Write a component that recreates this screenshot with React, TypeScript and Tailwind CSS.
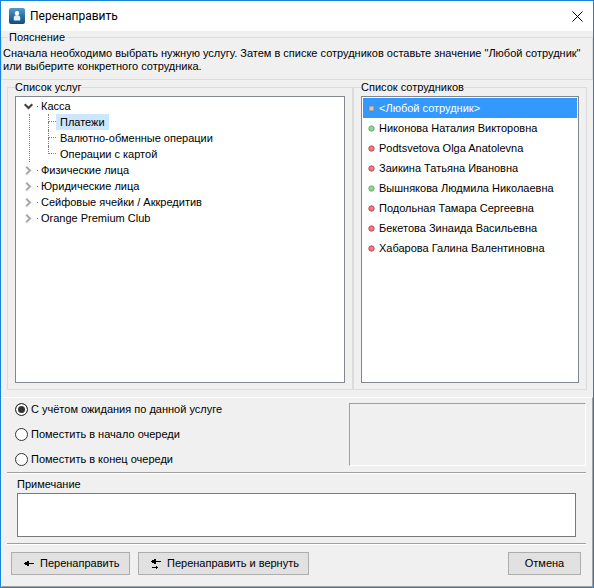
import React, { useState } from "react";

type Status = "any" | "free" | "busy";

const SERVICES: { name: string; children: string[] }[] = [
  { name: "Касса", children: ["Платежи", "Валютно-обменные операции", "Операции с картой"] },
  { name: "Физические лица", children: [] },
  { name: "Юридические лица", children: [] },
  { name: "Сейфовые ячейки / Аккредитив", children: [] },
  { name: "Orange Premium Club", children: [] },
];

const EMPLOYEES: { name: string; status: Status }[] = [
  { name: "<Любой сотрудник>", status: "any" },
  { name: "Никонова Наталия Викторовна", status: "free" },
  { name: "Podtsvetova Olga Anatolevna", status: "busy" },
  { name: "Заикина Татьяна Ивановна", status: "busy" },
  { name: "Вышнякова Людмила Николаевна", status: "free" },
  { name: "Подольная Тамара Сергеевна", status: "busy" },
  { name: "Бекетова Зинаида Васильевна", status: "busy" },
  { name: "Хабарова Галина Валентиновна", status: "busy" },
];

const QUEUE_MODES = [
  "С учётом ожидания по данной услуге",
  "Поместить в начало очереди",
  "Поместить в конец очереди",
];

const AppIcon = () => (
  <svg width="16" height="16" viewBox="0 0 16 16" aria-hidden="true">
    <defs>
      <linearGradient id="appIcon" x1="0" y1="0" x2="0" y2="1">
        <stop offset="0" stopColor="#5599cc" />
        <stop offset="0.5" stopColor="#2c70a8" />
        <stop offset="1" stopColor="#154a7c" />
      </linearGradient>
    </defs>
    <rect width="16" height="16" rx="2" fill="url(#appIcon)" />
    <circle cx="8" cy="5.2" r="2.2" fill="#fff" />
    <path d="M4.8 12.6V9.6Q4.8 7.4 7 7.2H9Q11.2 7.4 11.2 9.6V12.6Z" fill="#e8f0f7" />
  </svg>
);

const StatusIcon = ({ status }: { status: Status }) => {
  if (status === "any") {
    return (
      <svg width="7" height="7" viewBox="0 0 7 7" aria-hidden="true">
        <path d="M0.8 0.8L6.2 6.2M6.2 0.8L0.8 6.2" stroke="#7d7d7d" strokeWidth="2" />
        <rect x="1" y="1" width="5" height="5" fill="#a5a19c" />
        <rect x="2" y="2" width="3" height="3" fill="#d0ccc6" />
      </svg>
    );
  }
  const free = status === "free";
  return (
    <svg width="7" height="7" viewBox="0 0 7 7" aria-hidden="true">
      <circle cx="3.5" cy="3.5" r="2.7" fill={free ? "#86cf86" : "#e8707a"} stroke={free ? "#6ab56c" : "#d04a58"} />
      <circle cx="3.5" cy="3" r="1" fill={free ? "#a9e0a6" : "#f0959c"} />
    </svg>
  );
};

const Chevron = ({ open }: { open: boolean }) => (
  <svg width="9" height="9" viewBox="0 0 9 9" fill="none" strokeWidth="2" aria-hidden="true">
    {open ? <path d="M0.7 2.2L4.5 6L8.3 2.2" stroke="#404040" /> : <path d="M2.2 0.7L6 4.5L2.2 8.3" stroke="#a6a6a6" />}
  </svg>
);

const BackArrow = () => (
  <svg width="11" height="7" viewBox="0 0 11 7" shapeRendering="crispEdges" aria-hidden="true">
    <path d="M0 3H1V2H3V1H5V3H10V4H5V6H3V5H1V4H0Z" />
  </svg>
);

const SwapArrow = () => (
  <svg width="11" height="11" viewBox="0 0 11 11" shapeRendering="crispEdges" aria-hidden="true">
    <path d="M0 3H1V2H3V1H5V3H10V4H5V6H3V5H1V4H0Z" />
    <path d="M1 9H5V8H6V9H7V10H6V11H5V10H1Z" />
  </svg>
);

const Separator = () => <div className="h-[2px] border-t border-[#a0a0a0] bg-white" />;

const groupClass = "flex border border-[#dcdcdc]";
const listClass = "flex-1 overflow-auto border border-[#828790] bg-white p-px";
const buttonClass = "flex h-[23px] items-center border border-[#adadad] bg-[#e1e1e1] hover:border-[#0078d7] hover:bg-[#e5f1fb]";

const ServiceTree = () => {
  const [open, setOpen] = useState<Record<string, boolean>>({ Касса: true });
  const [selected, setSelected] = useState("Платежи");

  return (
    <ul className={listClass} aria-label="Список услуг">
      {SERVICES.map((group) => (
        <li key={group.name}>
          <button
            type="button"
            className="flex h-4 items-center pl-[7px]"
            aria-expanded={!!open[group.name]}
            onClick={() => setOpen({ ...open, [group.name]: !open[group.name] })}
          >
            <Chevron open={!!open[group.name]} />
            <span className="mr-[3px] ml-1 h-px w-px bg-[#808080]" />
            <span>{group.name}</span>
          </button>
          {open[group.name] && group.children.length > 0 && (
            <ul className="ml-3 border-l border-dotted border-[#808080] pl-[18px]">
              {group.children.map((child, i) => (
                <li key={child} className="flex h-4">
                  {/* ветка дерева */}
                  <span className="flex w-2 flex-col">
                    <span className="h-2 border-b border-l border-dotted border-[#808080]" />
                    {i < group.children.length - 1 && <span className="h-2 border-l border-dotted border-[#808080]" />}
                  </span>
                  <button
                    type="button"
                    className={`flex items-center px-1 ${selected === child ? "bg-[#cce8ff]" : ""}`}
                    onClick={() => setSelected(child)}
                  >
                    {child}
                  </button>
                </li>
              ))}
            </ul>
          )}
        </li>
      ))}
    </ul>
  );
};

const EmployeeList = () => {
  const [selected, setSelected] = useState(0);

  return (
    <ul className={listClass} aria-label="Список сотрудников">
      {EMPLOYEES.map((item, i) => (
        <li key={item.name}>
          <button
            type="button"
            className={`flex h-5 w-full items-center gap-1 pl-[5px] ${selected === i ? "bg-[#3399ff] text-white" : ""}`}
            onClick={() => setSelected(i)}
          >
            <StatusIcon status={item.status} />
            <span>{item.name}</span>
          </button>
        </li>
      ))}
    </ul>
  );
};

export default function App() {
  const [mode, setMode] = useState(0);
  const [note, setNote] = useState("");

  return (
    <div className="flex min-h-screen flex-col border border-[#1883d7] bg-[#f0f0f0] font-['Liberation_Sans',sans-serif] text-[11px] leading-[13px] text-black">
      <header className="flex h-[30px] items-center bg-white pl-2">
        <AppIcon />
        <h1 className="ml-[5px] flex-1 font-['Roboto',sans-serif] text-[12px]">Перенаправить</h1>
        <button type="button" aria-label="Закрыть" className="flex h-full w-[31px] items-center justify-center hover:bg-[#e81123] hover:text-white">
          <svg width="11" height="11" viewBox="0 0 11 11" stroke="currentColor" aria-hidden="true">
            <path d="M0.5 0.5L10.5 10.5M10.5 0.5L0.5 10.5" />
          </svg>
        </button>
      </header>

      <fieldset className="border border-[#dcdcdc] pt-[3px] pb-[6px] pl-px">
        <legend className="ml-[5px] px-px">Пояснение</legend>
        <p>
          Сначала необходимо выбрать нужную услугу. Затем в списке сотрудников оставьте значение "Любой сотрудник" или
          выберите конкретного сотрудника.
        </p>
      </fieldset>

      <main className="mt-px flex flex-1 pr-[6px] pb-[7px] pl-[6px]">
        <fieldset className={`${groupClass} flex-1 px-[7px] pt-[2px] pb-[6px]`}>
          <legend>Список услуг</legend>
          <ServiceTree />
        </fieldset>
        <fieldset className={`${groupClass} w-[234px] px-[7px] pt-[2px] pb-[6px]`}>
          <legend>Список сотрудников</legend>
          <EmployeeList />
        </fieldset>
      </main>

      <footer className="border border-t-white border-r-[#a0a0a0] border-b-[#a0a0a0] border-l-white pt-[5px] pr-[6px] pb-[11px] pl-[5px]">
        <div className="mb-[6px] flex h-[63px] justify-between pl-2">
          <div className="flex flex-col justify-between" role="radiogroup" aria-label="Место в очереди">
            {QUEUE_MODES.map((label, i) => (
              <label key={label} className="flex items-center gap-[3px]">
                <input
                  type="radio"
                  name="queue"
                  checked={mode === i}
                  onChange={() => setMode(i)}
                  className="h-[13px] w-[13px] appearance-none rounded-full border border-[#333] bg-white checked:bg-[#333] checked:shadow-[inset_0_0_0_2px_#fff]"
                />
                {label}
              </label>
            ))}
          </div>
          <div className="w-[237px] border border-t-[#a0a0a0] border-r-white border-b-white border-l-[#a0a0a0]" />
        </div>

        <Separator />
        <div className="mx-[10px] mt-1 mb-[6px] flex flex-col gap-[2px]">
          <label htmlFor="note">Примечание</label>
          <textarea
            id="note"
            value={note}
            onChange={(e) => setNote(e.target.value)}
            className="h-11 w-full resize-none border border-[#7a7a7a] bg-white p-[2px] outline-none focus:border-[#0078d7]"
          />
        </div>

        <Separator />
        <div className="mt-[7px] flex gap-2 pr-[5px] pl-1">
          <button type="button" className={`${buttonClass} w-[119px] gap-[5px] pl-3`}>
            <BackArrow />
            Перенаправить
          </button>
          <button type="button" className={`${buttonClass} w-[171px] gap-[5px] pl-3`}>
            <SwapArrow />
            Перенаправить и вернуть
          </button>
          <button type="button" className={`${buttonClass} ml-auto w-[73px] justify-center`}>
            Отмена
          </button>
        </div>
      </footer>
    </div>
  );
}
